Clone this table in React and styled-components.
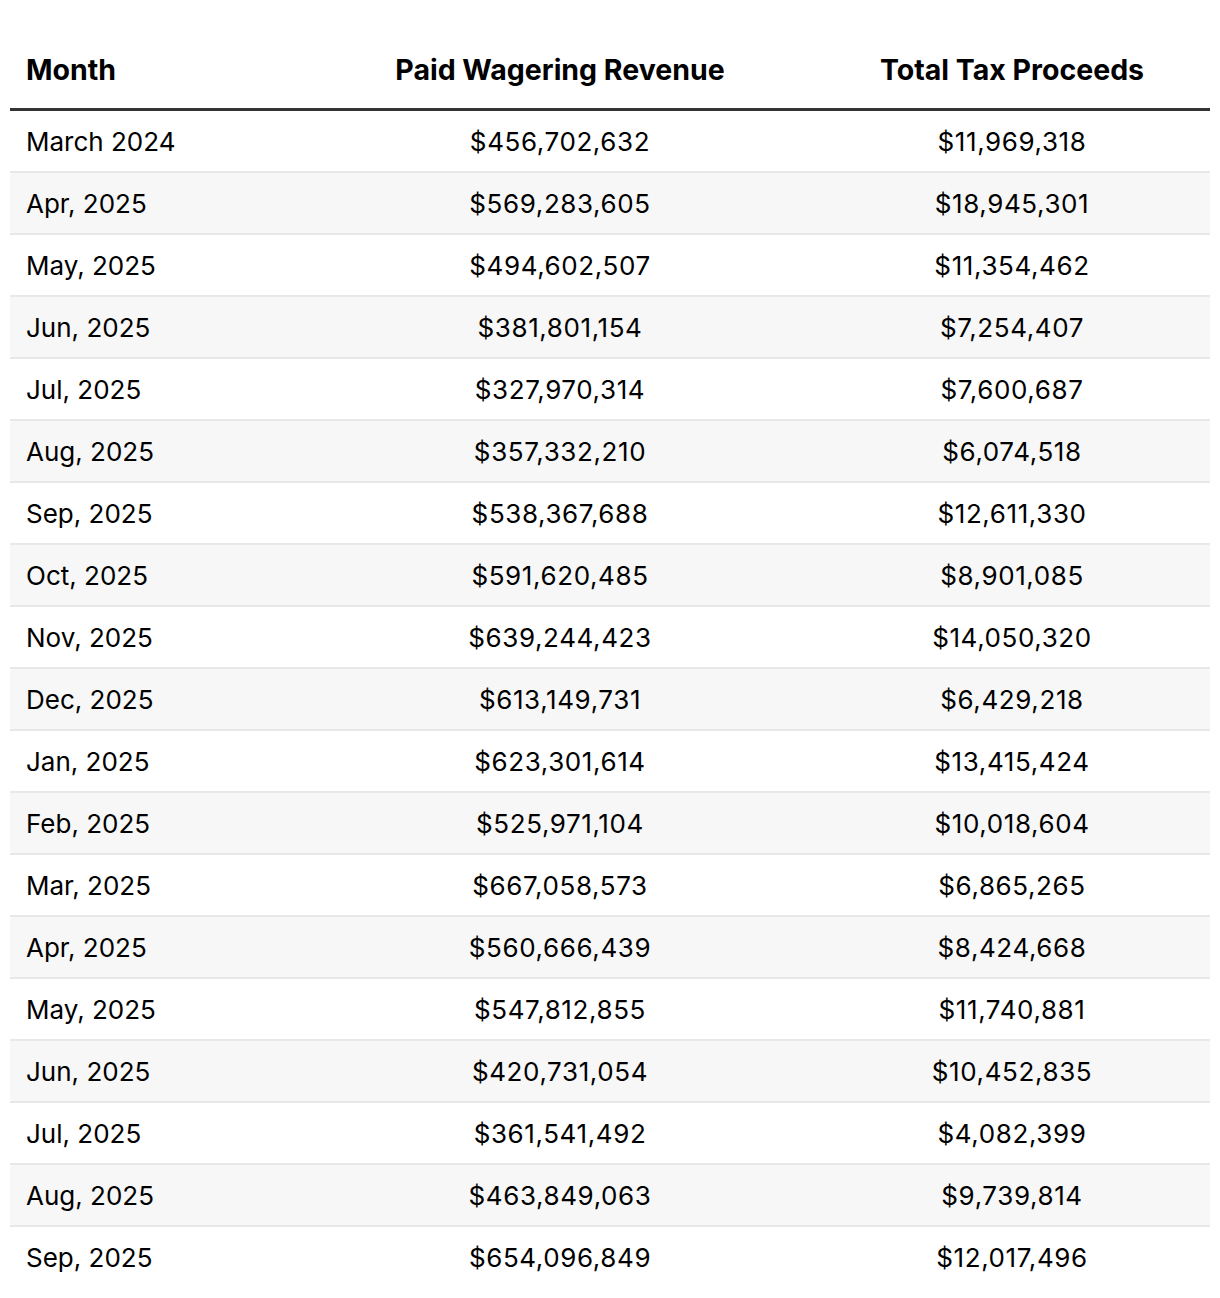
import { createGlobalStyle, styled } from "styled-components";

const GlobalStyle = createGlobalStyle`
  body {
    margin: 0;
    background: #fff;
    font-family: "Inter", "Liberation Sans", sans-serif;
    color: #000;
  }
`;

const Wrap = styled.div`
  padding: 30px 10px 8px;
`;

const Table = styled.table`
  width: 1200px;
  border-collapse: collapse;
  table-layout: fixed;
  font-size: 26px;
`;

const HeadCell = styled.th`
  height: 78px;
  padding: 0 16px;
  font-size: 28.5px;
  font-weight: 700;
  text-align: ${(p) => p.$align || "center"};
  vertical-align: middle;
  border-bottom: 3px solid #333;
`;

const Row = styled.tr`
  background: ${(p) => (p.$shade ? "#f7f7f7" : "#fff")};
  border-bottom: ${(p) => (p.$last ? "none" : "2px solid #e8e8e8")};
`;

const Cell = styled.td`
  height: 60px;
  padding: 0 16px;
  text-align: ${(p) => p.$align || "center"};
  letter-spacing: ${(p) => (p.$money ? "0.6px" : "0")};
  vertical-align: middle;
`;

const rows = [
  ["March 2024", "$456,702,632", "$11,969,318"],
  ["Apr, 2025", "$569,283,605", "$18,945,301"],
  ["May, 2025", "$494,602,507", "$11,354,462"],
  ["Jun, 2025", "$381,801,154", "$7,254,407"],
  ["Jul, 2025", "$327,970,314", "$7,600,687"],
  ["Aug, 2025", "$357,332,210", "$6,074,518"],
  ["Sep, 2025", "$538,367,688", "$12,611,330"],
  ["Oct, 2025", "$591,620,485", "$8,901,085"],
  ["Nov, 2025", "$639,244,423", "$14,050,320"],
  ["Dec, 2025", "$613,149,731", "$6,429,218"],
  ["Jan, 2025", "$623,301,614", "$13,415,424"],
  ["Feb, 2025", "$525,971,104", "$10,018,604"],
  ["Mar, 2025", "$667,058,573", "$6,865,265"],
  ["Apr, 2025", "$560,666,439", "$8,424,668"],
  ["May, 2025", "$547,812,855", "$11,740,881"],
  ["Jun, 2025", "$420,731,054", "$10,452,835"],
  ["Jul, 2025", "$361,541,492", "$4,082,399"],
  ["Aug, 2025", "$463,849,063", "$9,739,814"],
  ["Sep, 2025", "$654,096,849", "$12,017,496"],
];

const App = () => {
  return (
    <>
      <GlobalStyle />
      <Wrap>
        <Table>
          <colgroup>
            <col style={{ width: 296 }} />
            <col style={{ width: 508 }} />
            <col style={{ width: 396 }} />
          </colgroup>
          <thead>
            <tr>
              <HeadCell $align="left">Month</HeadCell>
              <HeadCell>Paid Wagering Revenue</HeadCell>
              <HeadCell>Total Tax Proceeds</HeadCell>
            </tr>
          </thead>
          <tbody>
            {rows.map((r, i) => (
              <Row key={i} $shade={i % 2 === 1} $last={i === rows.length - 1}>
                <Cell $align="left">{r[0]}</Cell>
                <Cell $money>{r[1]}</Cell>
                <Cell $money>{r[2]}</Cell>
              </Row>
            ))}
          </tbody>
        </Table>
      </Wrap>
    </>
  );
};

export default App;
